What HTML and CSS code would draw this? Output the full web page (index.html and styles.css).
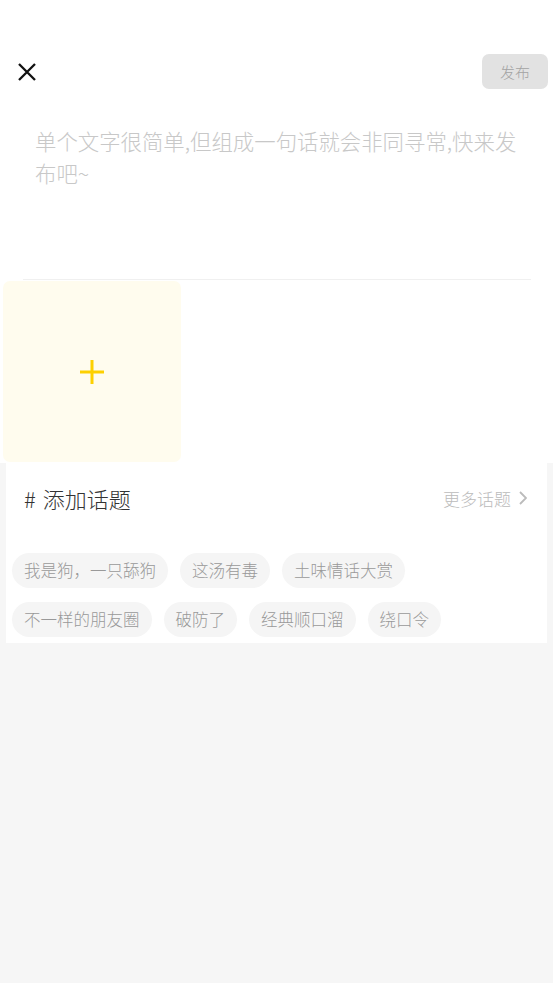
FILE: index.html
```html
<!DOCTYPE html>
<html lang="zh-CN">
<head>
<meta charset="utf-8">
<title>发布</title>
<link rel="stylesheet" href="styles.css">
</head>
<body>
<div class="top">
  <div class="header">
    <svg class="close" width="18" height="18" viewBox="0 0 18 18"><path d="M1 1 L17 17 M17 1 L1 17" stroke="#111" stroke-width="2.3" stroke-linecap="butt" fill="none"/></svg>
    <button class="publish">发布</button>
  </div>
  <div class="editor">单个文字很简单,但组成一句话就会非同寻常,快来发布吧~</div>
  <div class="divider"></div>
  <div class="media">
    <div class="add-box">
      <svg width="24" height="24" viewBox="0 0 24 24"><path d="M12 0 V24 M0 12 H24" stroke="#fdd000" stroke-width="3" fill="none"/></svg>
    </div>
  </div>
</div>
<div class="lower">
  <div class="card">
    <div class="card-head">
      <span class="title"><span class="hash">#</span>添加话题</span>
      <span class="more">更多话题<svg width="8" height="14" viewBox="0 0 8 14"><path d="M1 1 L7 7 L1 13" stroke="#bbb" stroke-width="1.8" fill="none"/></svg></span>
    </div>
    <div class="tags">
      <span class="tag">我是狗，一只舔狗</span>
      <span class="tag">这汤有毒</span>
      <span class="tag">土味情话大赏</span>
      <span class="tag">不一样的朋友圈</span>
      <span class="tag">破防了</span>
      <span class="tag">经典顺口溜</span>
      <span class="tag">绕口令</span>
    </div>
  </div>
</div>
</body>
</html>
```

FILE: styles.css
```css
* { box-sizing: border-box; }
html, body { margin: 0; padding: 0; }
body {
  background: #f6f6f6;
  font-family: "Noto Sans CJK SC", "Noto Sans", sans-serif;
  font-weight: 300;
  width: 553px;
  min-height: 983px;
}
.top { background: #fff; padding-bottom: 1px; }
.header {
  display: flex;
  justify-content: space-between;
  align-items: center;
  height: 89px;
  padding: 54px 5px 0 18px;
}
.close { display: block; }
.publish {
  width: 66px;
  height: 35px;
  border: none;
  border-radius: 7px;
  background: #e2e2e2;
  color: #a3a3a3;
  font-family: inherit;
  font-weight: 300;
  font-size: 15px;
  padding: 0;
}
.editor {
  height: 190px;
  padding: 36px 25px 0 35px;
  font-size: 21.4px;
  line-height: 32px;
  color: #c8c8c8;
}
.divider {
  height: 1px;
  margin: 0 22px 0 23px;
  background: #f0f0f0;
}
.media { padding: 1px 0 0 3px; }
.add-box {
  width: 178px;
  height: 181px;
  border-radius: 7px;
  background: #fffcee;
  display: flex;
  align-items: center;
  justify-content: center;
}
.add-box svg { display: block; }
.lower { padding: 0 6px; }
.card { background: #fff; padding-bottom: 6px; }
.card-head {
  height: 70px;
  display: flex;
  align-items: center;
  justify-content: space-between;
  padding: 0 20px 0 18px;
}
.title { font-size: 22px; color: #333; }
.hash { margin-right: 7px; }
.more {
  font-size: 17px;
  color: #bbb;
  display: flex;
  align-items: center;
  gap: 8px;
}
.more svg { display: block; }
.tags {
  display: flex;
  flex-wrap: wrap;
  gap: 14px 12px;
  padding: 20px 6px 0;
}
.tag {
  height: 35px;
  line-height: 35px;
  padding: 0 12px;
  border-radius: 18px;
  background: #f5f5f5;
  color: #999;
  font-size: 16.5px;
  white-space: nowrap;
}
```
